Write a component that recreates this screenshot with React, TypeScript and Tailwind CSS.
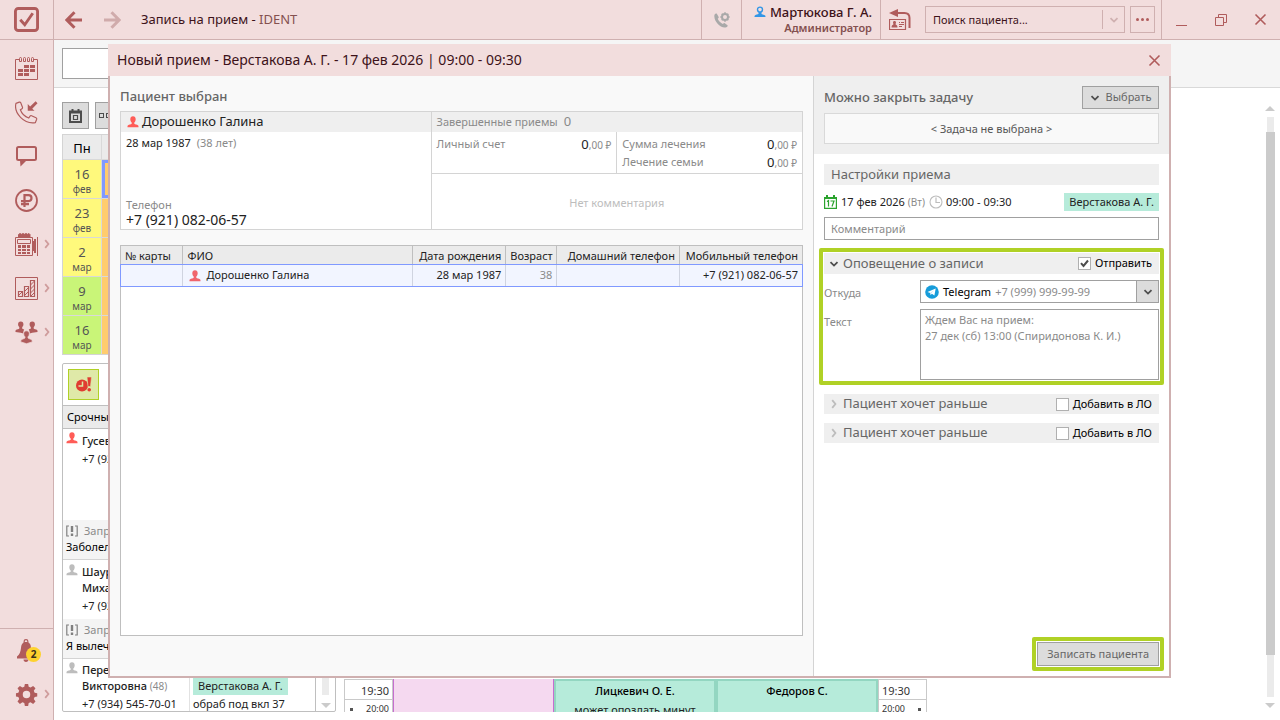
import { useState } from 'react';
import type { ReactNode } from 'react';

type IconProps = { className?: string };

const Chevron = ({ className = '', dir = 'down' }: IconProps & { dir?: 'down' | 'right' }) => (
  <svg className={className} width="10" height="10" viewBox="0 0 10 10" fill="none" stroke="currentColor" strokeWidth="1.8">
    <path d={dir === 'down' ? 'M1.5 3.2 5 6.6 8.5 3.2' : 'M3.2 1.2 6.4 5 3.2 8.8'} />
  </svg>
);

const Person = ({ className = '' }: IconProps) => (
  <svg className={className} width="12" height="12" viewBox="0 0 12 12" fill="currentColor">
    <path d="M6 .3c1.700 0 2.700 1.100 2.700 2.900C8.700 4.700 8 6 7.300 6.600v1.200C8 8.400 10 8.700 10.900 9.300c.6.400.6 1.200.6 1.900H.5c0-.7 0-1.500.6-1.900C2 8.700 4 8.400 4.700 7.800V6.600C4 6 3.300 4.700 3.300 3.200 3.300 1.400 4.300.3 6 .3z" />
  </svg>
);

const PersonOutline = ({ className = '' }: IconProps) => (
  <svg className={className} width="12" height="12" viewBox="0 0 12 12">
    <circle cx="6" cy="3.600" r="2.500" fill="none" stroke="currentColor" strokeWidth="1.400" />
    <path d="M4.500 6h3v2c.8.500 2.500.700 3.300 1.200.6.400.7 1 .7 1.900H.5c0-.9.100-1.500.7-1.900C2 8.700 3.700 8.500 4.500 8z" fill="currentColor" />
  </svg>
);

const CloseIcon = ({ className = '' }: IconProps) => (
  <svg className={className} width="13" height="13" viewBox="0 0 13 13" fill="none" stroke="currentColor" strokeWidth="1.6">
    <path d="M1.500 1.500l10 10M11.500 1.500l-10 10" />
  </svg>
);

const Arrow = ({ className = '' }: IconProps) => (
  <svg className={className} width="18" height="18" viewBox="0 0 18 18" fill="none" stroke="currentColor" strokeWidth="3">
    <path d="M17 9H3M9.500 1.200 1.900 9l7.600 7.800" />
  </svg>
);

const Logo = () => (
  <svg width="25" height="25" viewBox="0 0 26 26" fill="none" stroke="currentColor">
    <rect x="1.500" y="1.500" width="23" height="23" rx="3" strokeWidth="3" />
    <path d="M6.500 13.200l4.700 5.300L19.500 6.500" strokeWidth="3" />
  </svg>
);

const CalendarIcon = () => (
  <svg width="23" height="23" viewBox="0 0 23 23" fill="none" stroke="currentColor">
    <path d="M4 2.500H.5v20h22v-20H19" />
    <path d="M4.500 1.500a1 1 0 0 1 2 0v3h-2zM8.500 1.500a1 1 0 0 1 2 0v3h-2zM12.500 1.500a1 1 0 0 1 2 0v3h-2zM16.500 1.500a1 1 0 0 1 2 0v3h-2z" />
    <path d="M9 8h5v3H9zM15 8h5v3h-5zM3 12h5v3H3zM9 12h5v3H9zM15 12h5v3h-5zM3 16h5v3H3zM9 16h5v3H9z" fill="currentColor" stroke="none" />
  </svg>
);

const PhoneIcon = () => (
  <svg width="23" height="23" viewBox="0 0 24 24" fill="none" stroke="currentColor" strokeWidth="1.200">
    <path d="M1 2.500 4.500 1.200c.7-.2 1.200 0 1.500.700l1.800 4.600c.2.600 0 1.200-.5 1.500L5.600 9.200c1.500 4.200 5 7.300 8.700 8.500l1.400-2c.4-.5 1-.7 1.600-.4l4.600 2.200c.6.300.9.900.7 1.500l-1.300 3.500C9.500 24.500-1.500 12.500 1 2.500z" />
    <path d="M13.300 10.300V3.200l2.500 2.500L21.500.300l2 2-5.500 5.700 2.400 2.300z" fill="currentColor" stroke="none" />
  </svg>
);

const ChatIcon = () => (
  <svg width="23" height="23" viewBox="0 0 23 23" fill="none" stroke="currentColor" strokeWidth="2">
    <rect x="2" y="2" width="19" height="13" rx="1.500" />
    <path d="M5 15.500h6.500L5.500 21.500z" fill="currentColor" stroke="none" />
  </svg>
);

const RubleIcon = () => (
  <svg width="23" height="23" viewBox="0 0 23 23" fill="none" stroke="currentColor">
    <circle cx="11.500" cy="11.500" r="10.500" strokeWidth="1.800" />
    <path d="M9.500 18V6.100h4a3 3 0 0 1 0 6H6M6 15.200h8" strokeWidth="2.200" />
  </svg>
);

const RegisterIcon = () => (
  <svg width="23" height="23" viewBox="0 0 23 23" fill="none" stroke="currentColor">
    <path d="M3.500 4V1.500L5 .5l1.500.8L8 .5l1.500.8L11 .5l1.500.8 1.500-.8 1 1V4z" fill="currentColor" />
    <path d="M.5 4.500h17v18H.5zM2.500 6.500h13v4h-13zM22.500 4v19" />
    <path d="M17 8h2V6h2v14h-2v-2h-2z" fill="currentColor" stroke="none" />
    <path d="M3 12h3v3H3zM7 12h4v3H7zM12 12h3v3h-3zM3 16h3v2H3zM7 16h4v2H7zM12 16h3v2h-3zM3 19h3v2H3zM7 19h4v2H7zM12 19h3v2h-3z" fill="currentColor" stroke="none" />
  </svg>
);

const ChartIcon = () => (
  <svg width="23" height="23" viewBox="0 0 23 23" fill="none" stroke="currentColor">
    <path d="M.5.500h22v22H.5z" />
    <path d="M3.500 14.500h4v5h-4zM9.500 9.500h4v10h-4zM15.500 3.500h4v16h-4z" strokeWidth="1.200" />
    <path d="M3.500 18.500l4-4M9.500 14.500l4-4M9.500 18.500l4-4M15.500 8l4-4M15.500 12l4-4M15.500 16l4-4M15.500 19.500l4-4" />
  </svg>
);

const PeopleIcon = () => (
  <svg width="23" height="23" viewBox="0 0 24 24" fill="currentColor">
    <path d="M6 .5c2 0 2.800 1.300 2.800 3 0 1.300-.6 2.400-1.300 3v1.300c.8.700 1.700.7 2.100 1.200-1.100 1.300-1 2.700-.7 4L6 12.200.5 11.500c0-1.200-.2-1.700.8-2.300C2 8.800 4 8.500 4.500 7.800V6.500c-.7-.6-1.300-1.700-1.300-3 0-1.700.8-3 2.800-3z" />
    <path d="M18 .5c2 0 2.800 1.300 2.800 3 0 1.300-.6 2.400-1.300 3v1.300c.5.700 2.500 1 3.200 1.400 1 .6.8 1.100.8 2.300l-5.500.7-2.900.8c.3-1.300.4-2.700-.7-4 .4-.5 1.300-.5 2.100-1.200V6.500c-.7-.6-1.300-1.700-1.300-3 0-1.700.8-3 2.800-3z" />
    <path stroke="#f2dddd" strokeWidth=".8" d="M12 10.300c2.200 0 3 1.400 3 3.100 0 1.300-.6 2.500-1.400 3.100v1.200c.6.700 2.800 1.200 3.400 1.600 1 .6 1 1.300 1 2.500L12 23.700 6 21.800c0-1.200 0-1.900 1-2.500.6-.4 2.800-.9 3.400-1.600v-1.200C9.600 15.900 9 14.700 9 13.400c0-1.700.8-3.100 3-3.100z" />
  </svg>
);

const BellIcon = () => (
  <svg width="23" height="23" viewBox="0 0 23 23" fill="currentColor">
    <path d="M9.200 4V2C9.200 1 10 .6 11 .6s1.800.4 1.800 1.400v2" fill="none" stroke="currentColor" strokeWidth="1.200" />
    <path d="M11 3c3.500 0 5 2.500 5 6s1.500 6.500 4 8.500v2H2v-2C5 15.500 5.500 12.500 6 9c.4-3.500 1.500-6 5-6zM8.500 20.500h5c0 1.500-1 2.500-2.500 2.500s-2.500-1-2.500-2.500z" />
  </svg>
);

const GearIcon = () => (
  <svg width="23" height="23" viewBox="-1 -1 24 24" fill="currentColor" fillRule="evenodd">
    <path d="M9.300 0h3.400l.6 3 2 .8L17.900 2.100l2.500 2.500-1.800 2.500.9 2.100 2.700.6v3.300l-2.700.6-.9 2.100 1.800 2.500-2.500 2.500-2.600-1.800-2 .9-.6 3.100H9.300l-.6-3.100-2-.9-2.600 1.800-2.500-2.500 1.800-2.500-.9-2.100L0 13.100V9.800l2.500-.6.900-2.100-1.800-2.500 2.500-2.500L6.700 3.800l2-.8zM11 7.200a3.900 3.900 0 1 0 0 7.800 3.900 3.900 0 0 0 0-7.800z" />
  </svg>
);

const PhoneGearIcon = () => (
  <svg width="16" height="16" viewBox="0 0 16 16" fill="currentColor">
    <path d="M.5 2.700C1 1.700 2 1.300 2.700 1.600L4.700 5c.2.500-.1 1-1 1.700C4.500 8.600 6.600 10.800 8.900 11.900c.8-.7 1.400-1 1.900-.6l2.700 2c.5.600-.1 1.500-1.200 2C6.500 17-.900 8.800.5 2.700z" />
    <circle cx="11" cy="5" r="3" fill="none" stroke="currentColor" strokeWidth="2" />
    <path d="M11 .3v1.500M11 8.200v1.500M6.300 5h1.500M14.200 5h1.500M7.700 1.700l1 1M13.300 7.300l1 1M14.300 1.700l-1 1M8.700 7.300l-1 1" stroke="currentColor" strokeWidth="1.600" />
  </svg>
);

const CardReturnIcon = () => (
  <svg width="22" height="22" viewBox="0 0 22 22" fill="none" stroke="currentColor">
    <path d="M7 4h8.500c3.500 0 5 1.500 5 5v10" strokeWidth="2" />
    <path d="M0 4 9 0v8z" fill="currentColor" stroke="none" />
    <path d="M.5 10.500h16v10H.5z" strokeWidth="1.200" />
    <path d="M5.500 12c1 0 1.500.6 1.500 1.500 0 .8-.3 1.300-.6 1.600.2.900 1.800.7 2 2.400v1H2.600v-1c.2-1.700 1.800-1.500 2-2.400-.3-.3-.6-.8-.6-1.600 0-.9.500-1.500 1.500-1.500z" fill="currentColor" stroke="none" />
    <path d="M10 13.500h1M12 13.500h3M10 15.500h5M10 17.500h3" />
  </svg>
);

const RestoreIcon = () => (
  <svg width="12" height="12" viewBox="0 0 12 12" fill="none" stroke="currentColor">
    <path d="M.5 3.500h8v8h-8zM3.500 3.500v-3h8v8h-3" />
  </svg>
);

const Telegram = () => (
  <svg width="14" height="14" viewBox="0 0 14 14">
    <circle cx="7" cy="7" r="6.800" fill="#169cda" />
    <path d="M2.500 6.900 10.700 3.600 9.400 10.400 6.900 8.700 5.600 9.900 5.300 8z" fill="#fff" />
    <path d="M5.300 8 9 5.200 6.200 8.300 5.600 9.900z" fill="#b9dff2" />
  </svg>
);

const SmallCalendar = () => (
  <svg width="13" height="14" viewBox="0 0 13 14" fill="none" stroke="currentColor">
    <path d="M1 2.500h11v10.500H1z" strokeWidth="2" />
    <path d="M1 3.500h11M3.500 0v3M9.500 0v3" strokeWidth="2" />
    <path d="M4.500 6.500h4v4h-4z" strokeWidth="1.200" />
  </svg>
);

const DateIcon = () => (
  <svg width="13" height="14" viewBox="0 0 13 14" fill="none" stroke="currentColor">
    <path d="M.6 2.600h11.800v10.700H.6z" strokeWidth="1.200" />
    <path d="M0 3h13M3 0v2M10 0v2" strokeWidth="2" />
    <path d="M3 6.500 4.500 5.500v6M6.500 6h3.500L8 11.500" strokeWidth="1.200" />
  </svg>
);

const ClockIcon = () => (
  <svg width="14" height="14" viewBox="0 0 14 14" fill="none" stroke="#bdbdbd">
    <circle cx="7" cy="7" r="6" strokeWidth="1.100" />
    <path d="M7 2.500V7.500h4" strokeWidth="1.200" />
  </svg>
);

const UrgentIcon = () => (
  <svg width="16" height="16" viewBox="0 0 16 16" fill="#e03c31">
    <circle cx="6" cy="8.500" r="6" />
    <path d="M6.500 4.500V9H2.500" fill="none" stroke="#dce9a4" strokeWidth="1.500" />
    <path d="M11 0h4.500l-1 9.500h-2.500z" stroke="#dce9a4" strokeWidth=".6" />
    <circle cx="13.200" cy="12.800" r="1.800" />
  </svg>
);

const NoteIcon = () => (
  <svg width="12" height="12" viewBox="0 0 12 12" fill="none" stroke="#808080">
    <path d="M3 1H.8v10H3M9 1h2.200v10H9" strokeWidth="1.200" />
    <path d="M6 1v6M6 8.500v2.500" strokeWidth="2.400" />
  </svg>
);

const navItems: { label: string; icon: ReactNode; more?: boolean }[] = [
  { label: 'Расписание', icon: <CalendarIcon /> },
  { label: 'Звонки', icon: <PhoneIcon /> },
  { label: 'Сообщения', icon: <ChatIcon /> },
  { label: 'Оплата', icon: <RubleIcon /> },
  { label: 'Касса', icon: <RegisterIcon />, more: true },
  { label: 'Отчеты', icon: <ChartIcon />, more: true },
  { label: 'Персонал', icon: <PeopleIcon />, more: true },
];

function NavButton({ label, icon, more }: { label: string; icon: ReactNode; more?: boolean }) {
  return (
    <button aria-label={label} className="relative flex h-11 w-full items-start justify-center pt-2.5">
      {icon}
      {more && <Chevron dir="right" className="absolute top-4 right-px text-[#cf9c9c]" />}
    </button>
  );
}

function Sidebar() {
  return (
    <nav className="flex w-[54px] shrink-0 flex-col border-r border-[#cfb0b0] bg-[#f2dddd] pt-[7px] text-[#b05c5c]">
      {navItems.map((item) => (
        <NavButton key={item.label} {...item} />
      ))}
      <div className="mt-auto border-t border-[#cfb0b0] pb-[3px]">
        <div className="relative">
          <NavButton label="Уведомления" icon={<BellIcon />} />
          <span className="absolute top-[18px] right-3 flex size-[15px] items-center justify-center rounded-full bg-[#fdd22f] text-[10px] font-bold text-[#3a3018]">2</span>
        </div>
        <NavButton label="Настройки" icon={<GearIcon />} more />
      </div>
    </nav>
  );
}

function TopBar() {
  return (
    <header className="flex h-10 shrink-0 border-b border-[#cfb0b0] bg-[#f2dddd] text-[#b05c5c]">
      <div className="flex w-[54px] shrink-0 items-center justify-center border-r border-[#cfb0b0]">
        <Logo />
      </div>
      <div className="flex flex-1 items-center pl-[11px]">
        <button aria-label="Назад"><Arrow /></button>
        <button aria-label="Вперед" className="ml-5 text-[#d0abab]"><Arrow className="-scale-x-100" /></button>
        <h1 className="ml-5 text-[13px] text-[#3d1219]">
          Запись на прием - <span className="text-[#84504f]">IDENT</span>
        </h1>
      </div>
      <button aria-label="Телефония" className="flex w-10 items-center justify-center border-l border-[#cfb0b0] text-[#a9a9a9]">
        <PhoneGearIcon />
      </button>
      <div className="flex w-[139px] flex-col items-end justify-center border-l border-[#cfb0b0] pr-2 leading-4">
        <div className="flex items-center gap-1 text-[13px] leading-4 font-medium text-[#3d1219]">
          <PersonOutline className="text-[#3396e6]" />
          Мартюкова Г. А.
        </div>
        <div className="text-[11px] leading-4 font-semibold text-[#84504f]">Администратор</div>
      </div>
      <div className="flex items-center border-l border-[#cfb0b0] pr-1.5 pl-2">
        <button aria-label="Карта пациента"><CardReturnIcon /></button>
        <div className="ml-3.5 flex h-[27px] w-[200px] items-center border border-[#cfb0b0]">
          <input aria-label="Поиск пациента" placeholder="Поиск пациента..." className="h-full min-w-0 flex-1 bg-transparent pl-[7px] text-[11px] outline-none placeholder:text-[#3d1219]" />
          <button aria-label="Открыть список" className="flex h-[19px] w-[22px] items-center justify-center border-l border-[#cfb0b0] text-[#cfb0b0]">
            <Chevron />
          </button>
        </div>
        <button aria-label="Еще" className="ml-[5px] flex h-[27px] w-[25px] items-center justify-center gap-0.5 border border-[#cfb0b0]">
          <i className="size-[3px] rounded-full bg-current" />
          <i className="size-[3px] rounded-full bg-current" />
          <i className="size-[3px] rounded-full bg-current" />
        </button>
      </div>
      <div className="flex w-[119px] items-center justify-between border-l border-[#cfb0b0] pr-[13px] pl-3.5">
        <button aria-label="Свернуть" className="flex h-3 w-[11px] items-end"><i className="h-px w-full bg-current" /></button>
        <button aria-label="Восстановить"><RestoreIcon /></button>
        <button aria-label="Закрыть окно"><CloseIcon /></button>
      </div>
    </header>
  );
}

const weekDays = ['Пн', 'Вт', 'Ср', 'Чт', 'Пт', 'Сб', 'Вс'];
const weeks = [
  { start: new Date(2026, 1, 16), tone: 'bg-[#fff97c]' },
  { start: new Date(2026, 1, 23), tone: 'bg-[#fff97c]' },
  { start: new Date(2026, 2, 2), tone: 'bg-[#fff97c]' },
  { start: new Date(2026, 2, 9), tone: 'bg-[#c9f578]' },
  { start: new Date(2026, 2, 16), tone: 'bg-[#c9f578]' },
];

function MonthGrid() {
  return (
    <div className="mt-[5px] grid grid-cols-7 gap-px border border-[#d4d4d4] bg-[#d9d9d9] text-center text-[#555]">
      {weekDays.map((d) => (
        <div key={d} className="bg-[#ebebeb] pt-0.5 text-[13px] leading-[22px] text-black">{d}</div>
      ))}
      {weeks.flatMap((w, wi) =>
        weekDays.map((_, di) => {
          const day = new Date(w.start.getFullYear(), w.start.getMonth(), w.start.getDate() + di);
          const selected = wi === 0 && di === 1;
          return (
            <div key={`${wi}-${di}`} className={`h-[38px] overflow-hidden pt-[5px] ${di === 0 ? w.tone : 'bg-[#ffcc6e]'} ${selected ? 'inset-ring-3 inset-ring-[#8099ff]' : ''}`}>
              <div className="text-[13px] leading-[18px]">{day.getDate()}</div>
              <div className="text-[10px] leading-3">{day.getMonth() === 1 ? 'фев' : 'мар'}</div>
            </div>
          );
        }),
      )}
    </div>
  );
}

function Note({ text }: { text: string }) {
  return (
    <div className="h-10 shrink-0 border-b border-[#d4d4d4] bg-[#f4f4f4] px-[3px] pt-[3px] leading-4">
      <div className="flex items-center gap-1.5 text-[#8a8a8a]"><NoteIcon />Запрос</div>
      <div className="text-black">{text}</div>
    </div>
  );
}

function UrgentList() {
  return (
    <section className="mt-2 flex min-h-0 flex-1 flex-col overflow-hidden rounded-xs border border-[#bfbfbf] text-[11px] text-[#222]">
      <div className="h-[41px] shrink-0 px-[5px] pt-[5px]">
        <button aria-label="Срочные" className="flex size-[31px] items-center justify-center border border-[#b0d126] bg-[#dfe9a8]">
          <UrgentIcon />
        </button>
      </div>
      <div className="h-6 shrink-0 border-y border-[#bfbfbf] bg-[#ebebeb] pl-1 leading-[22px] text-black">Срочные</div>
      <div className="flex h-[91px] shrink-0 gap-1 px-[3px] pt-[3px]">
        <Person className="text-[#ff5c57]" />
        <div className="leading-[18px]"><div className="font-medium">Гусева</div><div>+7 (921)</div></div>
      </div>
      <Note text="Заболел зуб" />
      <div className="flex h-[59px] shrink-0 gap-1 px-[3px] pt-1">
        <Person className="text-[#bdbdbd]" />
        <div className="leading-4"><div className="font-medium">Шаурина</div><div className="font-medium">Михайловна</div><div className="leading-5">+7 (921)</div></div>
      </div>
      <Note text="Я вылечил" />
      <div className="flex h-[68px] shrink-0">
        <div className="flex w-[127px] gap-1 border-r border-[#e2e2e2] pt-[3px] pl-[3px]">
          <Person className="shrink-0 text-[#bdbdbd]" />
          <div className="leading-4 whitespace-nowrap">
            <div className="font-medium">Перев</div>
            <div><span className="font-medium">Викторовна</span> <span className="text-[10px] text-[#8a8a8a]">(48)</span></div>
            <div className="leading-5">+7 (934) 545-70-01</div>
          </div>
        </div>
        <div className="w-[126px] border-r border-[#bfbfbf] pt-[18px] pl-[3px]">
          <span className="inline-block bg-[#b6ebda] px-[5px] leading-[18px]">Верстакова А. Г.</span>
          <div className="leading-[18px]">обраб под вкл 37</div>
        </div>
        <div className="flex flex-1 flex-col items-center">
          <i className="h-9 w-[7px] bg-[#ebebeb]" />
          <i className="mt-2 border-x-5 border-t-5 border-x-transparent border-t-[#cbcbcb]" />
        </div>
      </div>
    </section>
  );
}

function TimeColumn({ side }: { side: 'left' | 'right' }) {
  const left = side === 'left';
  return (
    <div className="w-[49px] border-x border-[#c9c9c9] text-[#333]">
      <div className={`h-[21px] border-y border-[#c9c9c9] px-[3px] text-[11px] leading-[22px] ${left ? 'text-right' : 'text-left'}`}>19:30</div>
      <div className={`flex items-center justify-between px-[3px] text-[9px] leading-[18px] ${left ? '' : 'flex-row-reverse'}`}>
        <i className="mx-0.5 size-[3px] bg-[#555]" />
        20:00
      </div>
    </div>
  );
}

function Schedule() {
  return (
    <div className="ml-2 flex h-[33px] self-end overflow-hidden text-center text-[11px]">
      <TimeColumn side="left" />
      <div className="w-[161px] border-x border-[#c66ed0] bg-[#f5d9f0]" />
      <div className="w-[162px] border-2 border-b-0 border-[#93d6c1] bg-[#b6ebda] leading-[19px]">
        <div className="font-medium text-black">Лицкевич О. Е.</div>
        <div className="text-[#222]">может опоздать минут</div>
      </div>
      <div className="w-[162px] border-2 border-b-0 border-[#93d6c1] bg-[#b6ebda] leading-[19px]">
        <div className="font-medium text-black">Федоров С.</div>
      </div>
      <TimeColumn side="right" />
    </div>
  );
}

function Workspace() {
  return (
    <div className="flex h-full flex-col bg-white">
      <div className="h-12 shrink-0 border-b border-[#d9d9d9] bg-[#f5f5f5] px-2 pt-2">
        <input aria-label="Фильтр" className="h-[31px] w-60 border border-[#a0a0a0] bg-white" />
      </div>
      <div className="flex min-h-0 flex-1 pt-3.5 pr-[5px] pb-2 pl-2">
        <div className="flex w-[274px] shrink-0 flex-col">
          <div className="flex gap-1.5">
            <button aria-label="Сегодня" className="flex size-[27px] items-center justify-center border border-[#a0a0a0] bg-[#dcdcdc] text-[#4d4d4d]"><SmallCalendar /></button>
            <button aria-label="Период" className="flex h-[27px] w-10 items-center gap-0.5 border border-[#a0a0a0] bg-[#dcdcdc] pl-[3px]">
              <i className="size-[5px] border border-[#4d4d4d]" />
              <i className="size-[5px] border border-[#4d4d4d]" />
              <i className="size-[5px] border border-[#4d4d4d]" />
            </button>
          </div>
          <MonthGrid />
          <UrgentList />
        </div>
        <Schedule />
        <div className="-mb-2 ml-auto flex flex-col items-center pt-1 pb-3">
          <i className="border-x-5 border-b-5 border-x-transparent border-b-[#cbcbcb]" />
          <div className="my-1.5 flex w-[7px] flex-1 flex-col items-center bg-[#ebebeb] pt-[15px] pb-[42px]">
            <i className="w-[9px] flex-1 bg-[#cbcbcb]" />
          </div>
          <i className="border-x-5 border-t-5 border-x-transparent border-t-[#cbcbcb]" />
        </div>
      </div>
    </div>
  );
}

function Amount() {
  return (
    <span className="text-[10px] leading-[18px] text-[#8a8a8a]">
      <span className="text-[13px] leading-[18px] text-[#222]">0</span>,00 ₽
    </span>
  );
}

function PatientCard() {
  return (
    <section className="flex h-[119px] shrink-0 border border-[#d4d4d4] bg-white text-[11px]">
      <div className="flex flex-[310] flex-col border-r border-[#d4d4d4]">
        <div className="flex h-5 items-center gap-[3px] bg-[#efefef] pl-1.5 text-[13px] text-[#222]">
          <Person className="text-[#ff5c57]" />
          Дорошенко Галина
        </div>
        <div className="flex gap-1.5 px-[5px] pt-[3px] leading-4 text-[#222]">
          28 мар 1987 <span className="text-[#8a8a8a]">(38 лет)</span>
        </div>
        <div className="mt-auto px-[5px] pb-px">
          <div className="leading-[14px] text-[#8a8a8a]">Телефон</div>
          <div className="text-sm leading-4 text-[#222]">+7 (921) 082-06-57</div>
        </div>
      </div>
      <div className="flex flex-[371] flex-col text-[#8a8a8a]">
        <div className="flex h-5 items-center gap-1.5 bg-[#efefef] pl-[5px]">
          Завершенные приемы <span className="text-[13px]">0</span>
        </div>
        <div className="flex h-[42px] border-b border-[#d4d4d4] leading-[18px]">
          <div className="flex flex-1 justify-between border-r border-[#d4d4d4] px-[5px] pt-[3px]">
            Личный счет <Amount />
          </div>
          <div className="flex-1 px-[5px] pt-[3px]">
            <div className="flex h-[18px] justify-between">Сумма лечения <Amount /></div>
            <div className="flex h-[18px] justify-between">Лечение семьи <Amount /></div>
          </div>
        </div>
        <div className="flex flex-1 items-center justify-center pt-1 text-[#bdbdbd]">Нет комментария</div>
      </div>
    </section>
  );
}

function PatientTable() {
  return (
    <div className="mt-[15px] mb-10 flex-1 border border-[#bfbfbf] bg-white">
      <table className="w-full table-fixed border-collapse text-[11px]">
        <colgroup>
          <col className="w-[9.1%]" />
          <col />
          <col className="w-[13.7%]" />
          <col className="w-[7.5%]" />
          <col className="w-[18%]" />
          <col className="w-[18%]" />
        </colgroup>
        <thead>
          <tr className="h-[19px] bg-[#ebebeb] text-[#222] [&>th]:border-r [&>th]:border-[#bfbfbf] [&>th]:px-1 [&>th]:pt-0.5 [&>th]:font-normal [&>th]:whitespace-nowrap [&>th:last-child]:border-r-0">
            <th className="text-left">№ карты</th>
            <th className="text-left">ФИО</th>
            <th className="text-right">Дата рождения</th>
            <th className="text-right">Возраст</th>
            <th className="text-right">Домашний телефон</th>
            <th className="text-right">Мобильный телефон</th>
          </tr>
        </thead>
        <tbody>
          <tr className="h-[21px] bg-[#f2f5ff] text-[#222] outline outline-[#8099ff] [&>td]:border-r [&>td]:border-[#d0d4e0] [&>td]:px-1 [&>td:last-child]:border-r-0">
            <td />
            <td><span className="flex items-center gap-[5px] pl-0.5"><Person className="text-[#f0646c]" />Дорошенко Галина</span></td>
            <td className="text-right">28 мар 1987</td>
            <td className="text-right text-[#8a8a8a]">38</td>
            <td />
            <td className="text-right">+7 (921) 082-06-57</td>
          </tr>
        </tbody>
      </table>
    </div>
  );
}

function CheckLabel({ label, defaultChecked = false }: { label: string; defaultChecked?: boolean }) {
  const [on, setOn] = useState(defaultChecked);
  return (
    <label className="flex items-center gap-1 text-[11px] text-black">
      <span className="relative flex">
        <input type="checkbox" checked={on} onChange={(e) => setOn(e.target.checked)} className="size-[13px] appearance-none border border-[#b0b0b0] bg-white" />
        {on && (
          <svg className="pointer-events-none absolute inset-0" width="13" height="13" viewBox="0 0 13 13" fill="none" stroke="#4d4d4d" strokeWidth="2">
            <path d="M3 6.200l2.500 2.800L10 3.500" />
          </svg>
        )}
      </span>
      {label}
    </label>
  );
}

function EarlierRow() {
  return (
    <div className="mt-[9px] flex h-5 items-center bg-[#efefef] pr-[7px] pl-[5px]">
      <button className="flex flex-1 items-center gap-1 text-[13px] text-[#666]">
        <Chevron dir="right" className="text-[#bdbdbd]" />
        Пациент хочет раньше
      </button>
      <CheckLabel label="Добавить в ЛО" />
    </div>
  );
}

function SettingsPanel() {
  return (
    <aside className="flex w-[356px] shrink-0 flex-col border-l border-[#d4d4d4] bg-white text-[11px]">
      <section className="h-[78px] shrink-0 bg-[#efefef] p-2.5">
        <div className="flex items-center justify-between">
          <h3 className="text-[13px] font-medium text-[#666]">Можно закрыть задачу</h3>
          <button className="flex h-[23px] w-[77px] items-center justify-center gap-1.5 border border-[#a0a0a0] bg-[#dcdcdc] text-[#666]">
            <Chevron className="text-[#4d4d4d]" /> Выбрать
          </button>
        </div>
        <div className="mt-1 flex h-[31px] items-center justify-center border border-[#d9d9d9] bg-[#f9f9f9] pt-0.5 text-[#555]">&lt; Задача не выбрана &gt;</div>
      </section>
      <section className="flex flex-1 flex-col p-2.5 pb-[5px]">
        <h3 className="h-[21px] bg-[#efefef] pl-[7px] text-[13px] leading-[21px] text-[#666]">Настройки приема</h3>
        <div className="mt-2 flex h-[18px] items-center text-[#222]">
          <span className="text-[#2ba32e]"><DateIcon /></span>
          <span className="ml-1">17 фев 2026</span>
          <span className="mr-1 ml-[3px] text-[10px] text-[#8a8a8a]">(Вт)</span>
          <ClockIcon />
          <span className="ml-[3px]">09:00 - 09:30</span>
          <span className="ml-auto bg-[#b6ebda] px-[5px] leading-[18px]">Верстакова А. Г.</span>
        </div>
        <input aria-label="Комментарий" placeholder="Комментарий" className="mt-1.5 h-[23px] border border-[#a0a0a0] px-1.5 outline-none placeholder:text-[#8a8a8a]" />
        <div className="-mx-[5px] mt-2 rounded-xs border-4 border-[#b0d126] p-px">
          <div className="flex h-[21px] items-center bg-[#efefef] pr-[7px] pl-[5px]">
            <button className="flex flex-1 items-center gap-1 text-[13px] text-[#666]">
              <Chevron className="text-[#4d4d4d]" />
              Оповещение о записи
            </button>
            <CheckLabel label="Отправить" defaultChecked />
          </div>
          <div className="mt-1.5 flex text-[#8a8a8a]">
            <label htmlFor="source" className="h-[23px] w-24 leading-[26px]">Откуда</label>
            <div className="relative flex h-[23px] flex-1 items-center border border-[#a0a0a0] pl-1">
              <Telegram />
              <span className="ml-1 pt-0.5 text-black">Telegram</span>
              <span className="ml-1 pt-0.5">+7 (999) 999-99-99</span>
              <span className="ml-auto flex h-full w-[22px] items-center justify-center border-l border-[#a0a0a0] bg-[#dcdcdc] text-[#4d4d4d]"><Chevron /></span>
              <select id="source" className="absolute inset-0 opacity-0">
                <option>Telegram</option>
              </select>
            </div>
          </div>
          <div className="mt-1.5 flex text-[#8a8a8a]">
            <label htmlFor="message" className="w-24 leading-[26px]">Текст</label>
            <textarea id="message" className="block h-[71px] flex-1 resize-none border border-[#a0a0a0] px-1 pt-0.5 leading-4 outline-none" defaultValue={'Ждем Вас на прием:\n27 дек (сб) 13:00 (Спиридонова К. И.)'} />
          </div>
        </div>
        <EarlierRow />
        <EarlierRow />
        <div className="mt-auto -mr-[5px] self-end rounded-xs border-4 border-[#b0d126] p-px">
          <button className="block h-6 border border-[#a0a0a0] bg-[#dcdcdc] px-[9px] text-[#666]">Записать пациента</button>
        </div>
      </section>
    </aside>
  );
}

function VisitDialog() {
  return (
    <div role="dialog" aria-label="Новый прием" className="absolute top-1 right-[109px] bottom-[42px] left-[54px] flex flex-col">
      <div className="flex h-8 shrink-0 items-center justify-between bg-[#f2dddd] pr-2.5 pl-[9px]">
        <h2 className="text-sm text-[#3d1219]">Новый прием - Верстакова А. Г. - 17 фев 2026 | 09:00 - 09:30</h2>
        <button aria-label="Закрыть" className="text-[#b05c5c]"><CloseIcon /></button>
      </div>
      <div className="flex min-h-0 flex-1 border-x-2 border-b-2 border-[#cfb0b0]">
        <div className="flex flex-1 flex-col bg-[#f9f9f9] px-2.5">
          <h3 className="h-[35px] pt-2.5 text-[13px] leading-5 font-medium text-[#666]">Пациент выбран</h3>
          <PatientCard />
          <PatientTable />
        </div>
        <SettingsPanel />
      </div>
    </div>
  );
}

export default function App() {
  return (
    <div className="flex h-screen flex-col overflow-hidden bg-white font-['Noto_Sans','Open_Sans',sans-serif]">
      <TopBar />
      <div className="flex min-h-0 flex-1">
        <Sidebar />
        <main className="relative min-w-0 flex-1">
          <Workspace />
          <VisitDialog />
        </main>
      </div>
    </div>
  );
}
